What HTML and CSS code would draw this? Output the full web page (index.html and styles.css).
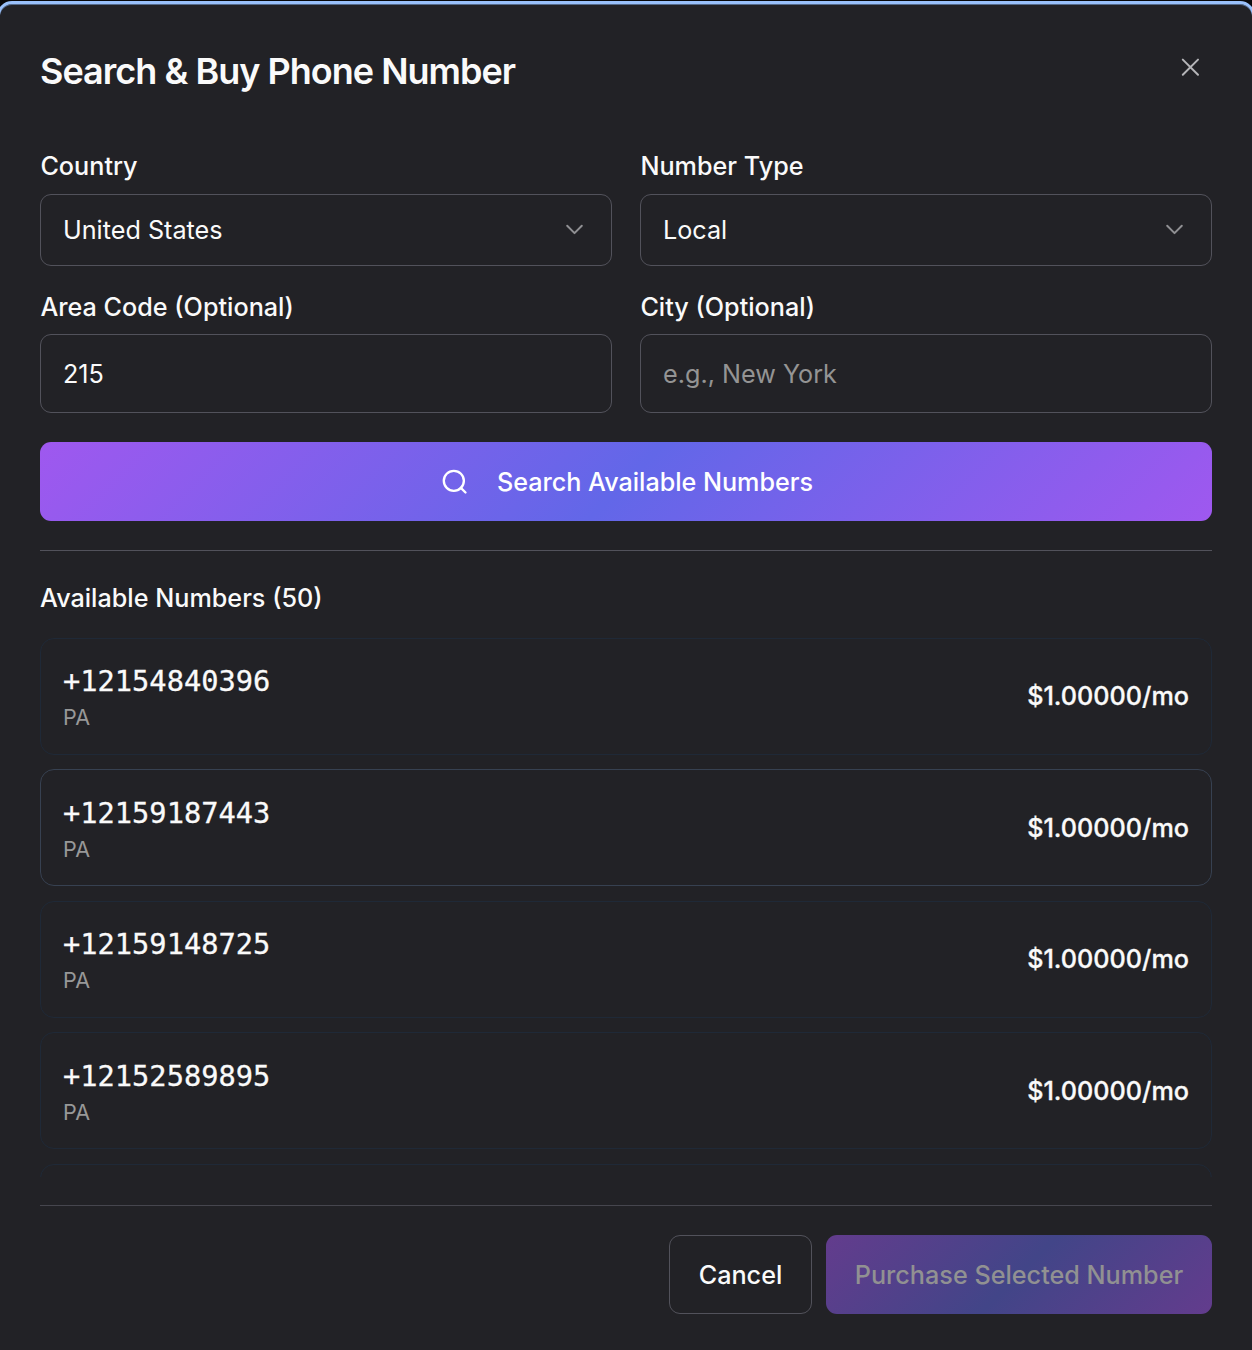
FILE: index.html
```html
<!DOCTYPE html>
<html lang="en">
<head>
    <meta charset="UTF-8">
    <meta name="viewport" content="width=device-width, initial-scale=1.0">
    <title>Search &amp; Buy Phone Number</title>
    <link rel="stylesheet" href="styles.css">
</head>
<body>

<div class="modal">
    <div class="modal-header">
        <h1>Search &amp; Buy Phone Number</h1>
        <button class="close-btn" aria-label="Close">
            <svg width="28" height="28" viewBox="0 0 28 28"><path d="M6.8 6.6l15.2 15.2M22 6.6L6.8 21.8"/></svg>
        </button>
    </div>

    <div class="form-grid">
        <div class="field">
            <span class="label">Country</span>
            <button class="select">
                <span>United States</span>
                <svg width="28" height="28" viewBox="0 0 28 28"><path d="M6.2 9.8l7.3 7.3 7.3-7.3"/></svg>
            </button>
        </div>
        <div class="field">
            <span class="label">Number Type</span>
            <button class="select">
                <span>Local</span>
                <svg width="28" height="28" viewBox="0 0 28 28"><path d="M6.2 9.8l7.3 7.3 7.3-7.3"/></svg>
            </button>
        </div>
        <div class="field">
            <label class="label" for="areaCode">Area Code (Optional)</label>
            <input class="input" type="text" id="areaCode" value="215">
        </div>
        <div class="field">
            <label class="label" for="city">City (Optional)</label>
            <input class="input" type="text" id="city" placeholder="e.g., New York">
        </div>
    </div>

    <button class="search-btn">
        <svg width="28" height="28" viewBox="0 0 24 24"><circle cx="11" cy="11" r="8.6"/><path d="M21 21l-4-4"/></svg>
        <span>Search Available Numbers</span>
    </button>

    <div class="results">
        <h2 class="label">Available Numbers (50)</h2>
        <div class="number-list">
            <div class="number-card">
                <div class="number-info">
                    <div class="number">+12154840396</div>
                    <div class="region">PA</div>
                </div>
                <div class="price">$1.00000/mo</div>
            </div>
            <div class="number-card hovered">
                <div class="number-info">
                    <div class="number">+12159187443</div>
                    <div class="region">PA</div>
                </div>
                <div class="price">$1.00000/mo</div>
            </div>
            <div class="number-card">
                <div class="number-info">
                    <div class="number">+12159148725</div>
                    <div class="region">PA</div>
                </div>
                <div class="price">$1.00000/mo</div>
            </div>
            <div class="number-card">
                <div class="number-info">
                    <div class="number">+12152589895</div>
                    <div class="region">PA</div>
                </div>
                <div class="price">$1.00000/mo</div>
            </div>
            <div class="number-card"></div>
        </div>
    </div>

    <div class="modal-footer">
        <button class="cancel-btn">Cancel</button>
        <button class="purchase-btn" disabled>Purchase Selected Number</button>
    </div>
</div>

</body>
</html>
```
FILE: styles.css
```css
* {
    box-sizing: border-box;
}
body {
    margin: 0;
    height: 1350px;
    overflow: hidden;
    background-color: #09090b;
    color: #fafafa;
    font-family: Inter, "Liberation Sans", sans-serif;
    font-size: 25.2px;
}
button, input {
    font: inherit;
    color: inherit;
    margin: 0;
}
svg {
    flex: none;
    fill: none;
    stroke: currentColor;
    stroke-width: 2;
    stroke-linecap: round;
    stroke-linejoin: round;
}
.modal {
    margin: 1px -3px 0;
    height: 1380px;
    padding: 36px 40px 0;
    background-color: #222226;
    border: 3px solid #9ac1fb;
    border-radius: 15px;
    box-shadow: inset 0 1px 0 #566b8b;
}
.modal-header {
    display: flex;
    justify-content: space-between;
    height: 108px;
}
.modal-header h1 {
    margin: 9px 0 0;
    font-size: 36px;
    line-height: 44px;
    font-weight: 600;
    letter-spacing: -0.98px;
}
.close-btn {
    display: flex;
    width: 28px;
    height: 28px;
    margin: 13px 8px 0 0;
    padding: 0;
    border: none;
    background: none;
    color: #b5b5b8;
}
.form-grid {
    display: grid;
    grid-template-columns: 1fr 1fr;
    column-gap: 28px;
    row-gap: 23px;
}
.field {
    display: flex;
    flex-direction: column;
}
.label {
    margin: 0;
    font-size: 25.2px;
    line-height: 36px;
    font-weight: 500;
}
.field .label {
    margin-bottom: 9px;
    padding-left: 0.4px;
}
.field span.label {
    margin-bottom: 10px;
}
.select, .input {
    width: 100%;
    padding: 0 22px;
    border: 1px solid #52525b;
    border-radius: 11px;
    background: none;
    outline: none;
}
.select {
    display: flex;
    align-items: center;
    justify-content: space-between;
    height: 72px;
}
.select svg {
    color: #909093;
}
.input {
    height: 79px;
}
.input::placeholder {
    color: #949494;
    opacity: 1;
}
.search-btn {
    display: flex;
    align-items: center;
    justify-content: center;
    gap: 28px;
    width: 100%;
    height: 79px;
    margin-top: 29px;
    padding: 0 6px 0 8px;
    border: none;
    border-radius: 11px;
    background: linear-gradient(135deg, #9f58ef, #6267e8 50%, #9f58ef);
    color: #fff;
    font-weight: 500;
    letter-spacing: -0.03px;
}
.results {
    margin-top: 29px;
    padding-top: 29px;
    border-top: 1px solid #52525b;
}
.number-list {
    height: 539.1px;
    margin-top: 21.9px;
    overflow: hidden;
}
.number-card {
    display: flex;
    align-items: center;
    justify-content: space-between;
    height: 117px;
    margin-bottom: 14.5px;
    padding: 0 22px;
    border: 1px solid #1f2937;
    border-radius: 14px;
}
.number-card.hovered {
    border-color: #374151;
}
.number-info {
    padding-top: 2px;
}
.number {
    font-family: "DejaVu Sans Mono", monospace;
    font-size: 28.7px;
    line-height: 40px;
    -webkit-text-stroke: 0.3px;
}
.region {
    font-size: 21.5px;
    line-height: 32px;
    color: #989898;
}
.price {
    font-weight: 500;
    -webkit-text-stroke: 0.3px;
}
.modal-footer {
    display: flex;
    justify-content: flex-end;
    gap: 14px;
    margin-top: 28px;
    padding-top: 29px;
    border-top: 1px solid #46464e;
}
.cancel-btn, .purchase-btn {
    height: 79px;
    padding: 2px 0 0;
    border-radius: 11px;
    font-weight: 500;
}
.cancel-btn {
    width: 143px;
    border: 1px solid #52525b;
    background: none;
}
.purchase-btn {
    width: 386px;
    border: none;
    background: linear-gradient(135deg, #633c8d, #424588 50%, #633c8d);
    color: #919192;
}
```
